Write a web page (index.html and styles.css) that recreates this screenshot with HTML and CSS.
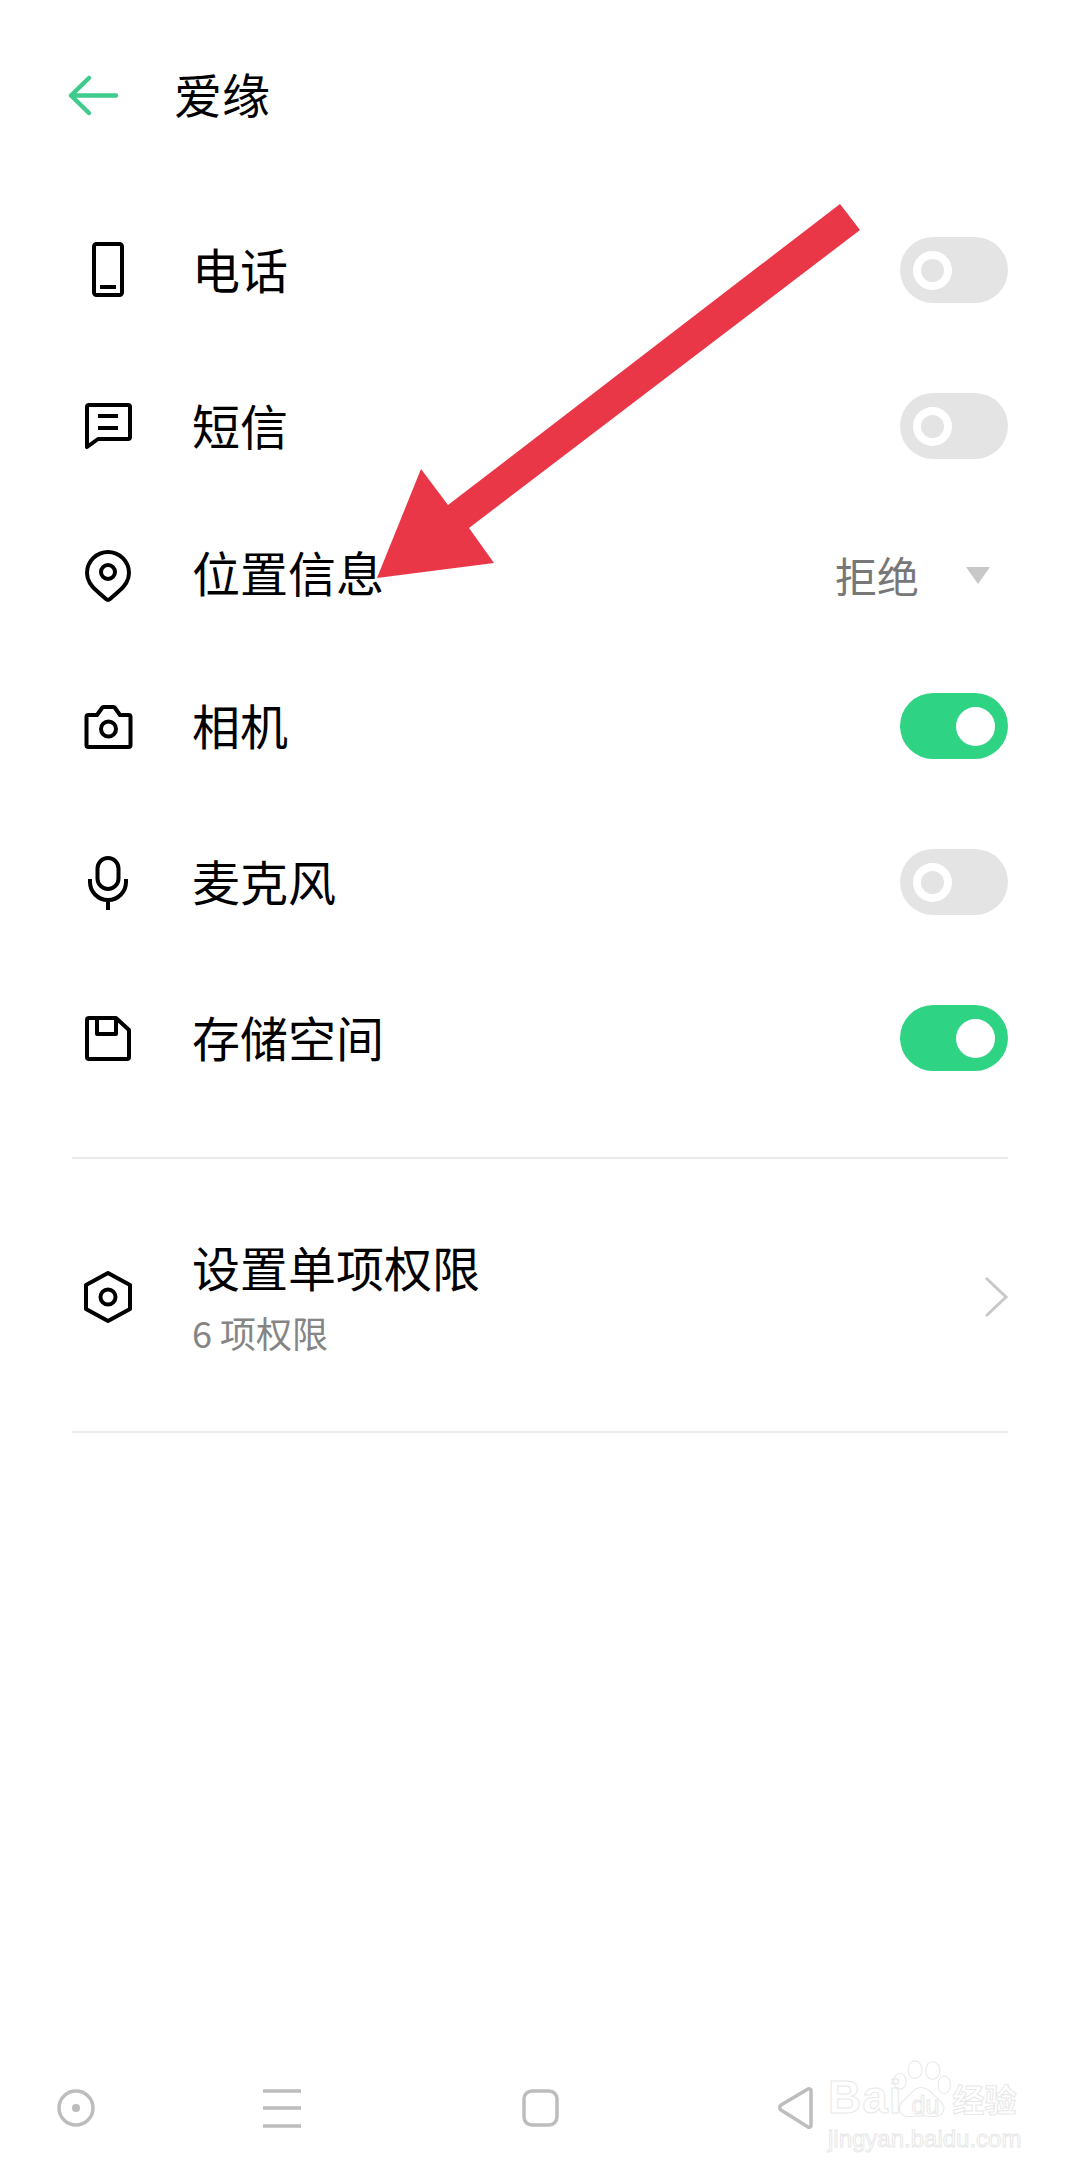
FILE: index.html
```html
<!DOCTYPE html>
<html lang="zh-CN">
<head>
    <meta charset="UTF-8">
    <meta name="viewport" content="width=device-width, initial-scale=1.0">
    <title>爱缘</title>
    <link rel="stylesheet" href="styles.css">
</head>
<body>
    <div class="page">
        <header class="header">
            <svg class="back" viewBox="0 0 60 60"><path d="M29 13 11 30.500 29 48M11 30.500H56"/></svg>
            <h1>爱缘</h1>
        </header>

        <main class="content">
            <div class="row">
                <svg class="icon" viewBox="0 0 60 60"><rect x="16" y="4" width="28" height="51" rx="2.500"/><path d="M22 47H38"/></svg>
                <span class="label">电话</span>
                <div class="switch"><span class="thumb"></span></div>
            </div>
            <div class="row">
                <svg class="icon" viewBox="0 0 60 60"><path d="M9 51V11a2 2 0 0 1 2-2H50a2 2 0 0 1 2 2V41a2 2 0 0 1-2 2H20Z"/><path d="M20 20H40M20 32H40"/></svg>
                <span class="label">短信</span>
                <div class="switch"><span class="thumb"></span></div>
            </div>
            <div class="row row-location">
                <svg class="icon" viewBox="0 0 60 60"><path d="M30 9a21 21 0 0 1 21 21c0 9-6 15-11 19l-8 7a3 3 0 0 1-4 0l-8-7C15 45 9 39 9 30A21 21 0 0 1 30 9Z"/><circle cx="30" cy="29" r="7"/></svg>
                <span class="label">位置信息</span>
                <span class="value">拒绝</span>
                <span class="caret"></span>
            </div>
            <div class="row">
                <svg class="icon" viewBox="0 0 60 60"><path d="M8.500 21a2 2 0 0 1 2-2h8.500l5-7a2 2 0 0 1 2-1H35a2 2 0 0 1 2 1l5 7h8.500a2 2 0 0 1 2 2V49a2 2 0 0 1-2 2H10.500a2 2 0 0 1-2-2Z"/><circle cx="30.500" cy="33" r="7.500"/></svg>
                <span class="label">相机</span>
                <div class="switch on"><span class="thumb"></span></div>
            </div>
            <div class="row">
                <svg class="icon" viewBox="0 0 60 60"><rect x="19.500" y="6" width="21" height="31" rx="10.500"/><path d="M12 27V30a18 18 0 0 0 36 0V27M30 48V58"/></svg>
                <span class="label">麦克风</span>
                <div class="switch"><span class="thumb"></span></div>
            </div>
            <div class="row">
                <svg class="icon" viewBox="0 0 60 60"><path d="M11 10H38L51 22V49a2 2 0 0 1-2 2H11a2 2 0 0 1-2-2V12A2 2 0 0 1 11 10Z"/><path d="M19 10V26H38V10"/></svg>
                <span class="label">存储空间</span>
                <div class="switch on"><span class="thumb"></span></div>
            </div>

            <div class="row row-all">
                <svg class="icon" viewBox="0 0 60 60"><path d="M30 6 52 18V42L30 54 8 42V18Z"/><circle cx="30" cy="30" r="7.500"/></svg>
                <div class="text">
                    <div class="label">设置单项权限</div>
                    <div class="sub">6 项权限</div>
                </div>
                <svg class="chevron" viewBox="0 0 24 42"><path d="M2 2 22 21 2 40"/></svg>
            </div>
        </main>

        <nav class="nav">
            <svg class="nav-icon" viewBox="0 0 60 60"><circle cx="30" cy="30" r="17"/><circle class="dot" cx="30" cy="30" r="4"/></svg>
            <svg class="nav-icon nav-menu" viewBox="0 0 60 60"><path d="M11 13H49M11 30H49M11 48H49"/></svg>
            <svg class="nav-icon nav-home" viewBox="0 0 60 60"><rect x="14" y="13" width="33" height="34" rx="8"/></svg>
            <svg class="nav-icon nav-back" viewBox="0 0 60 60"><path d="M45 13a2 2 0 0 0-3-2L15 27a3 3 0 0 0 0 5L42 49a2 2 0 0 0 3-2Z"/></svg>
        </nav>

        <svg class="annotation" viewBox="0 0 1080 700"><polygon points="377,578 421,469 448,505 840,204 860,230 469,528 494,563"/></svg>

        <div class="watermark">
            <svg class="paw" viewBox="0 0 70 70">
                <ellipse cx="9" cy="24" rx="7" ry="9"/>
                <ellipse cx="26" cy="11" rx="8" ry="10"/>
                <ellipse cx="46" cy="12" rx="8" ry="10"/>
                <ellipse cx="59" cy="28" rx="7" ry="10"/>
                <path d="M33 31C24 31 22 39 15 44 8 49 6 56 11 61 16 66 24 63 34 63 44 63 52 66 57 60 61 54 56 47 50 42 45 38 42 31 33 31Z"/>
            </svg>
            <div class="brand">
                <span class="brand-bai">Bai</span>
                <span class="brand-du">du</span>
                <span class="brand-cn">经验</span>
            </div>
            <div class="brand-url">jingyan.baidu.com</div>
        </div>
    </div>
</body>
</html>
```

FILE: styles.css
```css
*{
    margin: 0;
    padding: 0;
    box-sizing: border-box;
}

html, body {
    width: 1080px;
    height: 2175px;
    background-color: white;
}

body {
    font-family: "Noto Sans CJK SC", "Noto Sans", sans-serif;
    color: black;
}

.page{
    position: relative;
    width: 1080px;
    height: 2175px;
    display: flex;
    flex-direction: column;
    overflow: hidden;
}

.header{
    height: 192px;
    padding-left: 60px;
    padding-bottom: 2px;
    display: flex;
    align-items: center;
}
.header h1{
    font-size: 48px;
    font-weight: 400;
    margin-left: 54px;
    margin-top: -4px;
}
.back{
    width: 60px;
    height: 60px;
    fill: none;
    stroke: #3ecb8c;
    stroke-width: 4.5;
    stroke-linecap: round;
    stroke-linejoin: round;
}

.content{
    flex: 1;
}

.row{
    height: 156px;
    padding: 0 72px 0 78px;
    display: flex;
    align-items: center;
}
.row-location{
    height: 144px;
    padding-bottom: 6px;
}
.row-all{
    height: 276px;
    margin-top: 41px;
    padding-top: 4px;
    border-top: 2px solid #ebebeb;
    border-bottom: 2px solid #ebebeb;
    margin-left: 72px;
    margin-right: 72px;
    padding-left: 6px;
    padding-right: 0;
}

.icon{
    width: 60px;
    height: 60px;
    flex-shrink: 0;
    margin-right: 54px;
    overflow: visible;
    fill: none;
    stroke: black;
    stroke-width: 4;
    stroke-linejoin: round;
}

.label{
    font-size: 48px;
    line-height: 60px;
}
.row > .label{
    margin-top: -5px;
}

.switch{
    width: 108px;
    height: 66px;
    margin-left: auto;
    padding-left: 13px;
    border-radius: 33px;
    background-color: #e4e4e4;
    display: flex;
    align-items: center;
}
.thumb{
    width: 39px;
    height: 39px;
    border-radius: 50%;
    border: 8px solid white;
}
.switch.on{
    background-color: #2fd384;
    padding-left: 56px;
}
.switch.on .thumb{
    background-color: white;
}

.value{
    margin-left: auto;
    margin-top: 2px;
    font-size: 42px;
    color: #777;
}
.caret{
    margin-left: 47px;
    margin-right: 18px;
    margin-top: 5px;
    width: 0;
    height: 0;
    border-left: 12px solid transparent;
    border-right: 12px solid transparent;
    border-top: 17px solid #c8c8c8;
}

.text{
    display: flex;
    flex-direction: column;
    margin-top: -2px;
}
.sub{
    font-size: 36px;
    line-height: 50px;
    margin-top: 11px;
    color: #858585;
}
.chevron{
    width: 24px;
    height: 42px;
    margin-left: auto;
    fill: none;
    stroke: #c8c8c8;
    stroke-width: 3;
}

.nav{
    height: 136px;
    padding-left: 46px;
    padding-top: 2px;
    display: flex;
    align-items: center;
}
.nav-icon{
    width: 60px;
    height: 60px;
    fill: none;
    stroke: #bdbdbd;
    stroke-width: 3.5;
    stroke-linejoin: round;
}
.nav-icon .dot{
    fill: #bdbdbd;
    stroke: none;
}
.nav-menu{
    margin-left: 146px;
}
.nav-home{
    margin-left: 198px;
}
.nav-back{
    margin-left: 196px;
}

.annotation{
    position: absolute;
    top: 0;
    left: 0;
    width: 1080px;
    height: 700px;
    fill: #ea3748;
}

/* watermark sits over the nav bar */
.watermark{
    position: absolute;
    left: 828px;
    top: 2060px;
    width: 200px;
    height: 92px;
    font-family: "Liberation Sans", sans-serif;
    font-weight: 700;
    color: transparent;
    -webkit-text-stroke: 1px #e8e8e8;
}
.paw{
    position: absolute;
    left: 64px;
    top: 0;
    width: 62px;
    height: 62px;
    fill: white;
    stroke: #e8e8e8;
    stroke-width: 1.200;
}
.brand{
    position: relative;
    height: 66px;
    display: flex;
    align-items: flex-end;
}
.brand-bai{
    font-size: 46px;
    line-height: 58px;
    letter-spacing: 1px;
}
.brand-du{
    font-size: 25px;
    line-height: 42px;
    margin-left: 9px;
    font-weight: 400;
}
.brand-cn{
    font-family: "Noto Sans CJK SC", sans-serif;
    font-size: 32px;
    line-height: 56px;
    margin-left: 13px;
}
.brand-url{
    position: relative;
    font-size: 24px;
    line-height: 26px;
    font-weight: 400;
}
```
